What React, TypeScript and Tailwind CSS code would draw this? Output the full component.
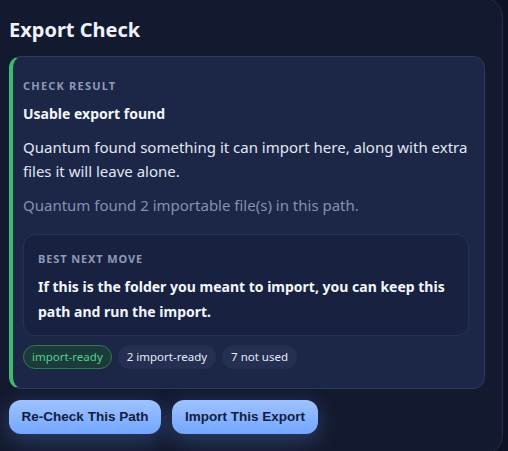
import React from "react";

export default function App() {
  const body = { fontFamily: '"Noto Sans", "Open Sans", sans-serif' };
  const btn = { fontFamily: '"Liberation Sans", Arial, sans-serif' };
  return (
    <div className="w-[508px] h-[451px] overflow-hidden bg-[#0d1322]" style={body}>
      <div className="-ml-[12px] -mt-[3px] w-[515px] h-[458px] rounded-[20px] border border-[#232d48] bg-[#131a2f] pl-[20px] pr-[17px] pt-[18px]">
        <h1 className="text-[20px] leading-[28px] font-bold text-[#eef2fb]">Export Check</h1>
        <div className="mt-[12px] w-[476px] rounded-[12px] border border-[#2c3960] border-l-[4px] border-l-[#3dbb6c] bg-[#1c2646] pl-[10px] pr-[15px] pt-[21px] pb-[19px]">
          <div className="text-[11px] leading-[16px] font-bold tracking-[0.11em] text-[#8d9aba]">CHECK RESULT</div>
          <div className="mt-[9px] text-[14px] leading-[22px] font-bold text-[#f3f6fc]">Usable export found</div>
          <p className="mt-[10px] text-[15px] leading-[24px] text-[#e2e7f3]">
            Quantum found something it can import here, along with extra files it will leave alone.
          </p>
          <p className="mt-[11px] text-[15px] leading-[22px] text-[#8391b3]">
            Quantum found 2 importable file(s) in this path.
          </p>
          <div className="mt-[18px] rounded-[12px] border border-[#25315a] bg-[#182240] px-[14px] pt-[16px] pb-[11px]">
            <div className="text-[11px] leading-[16px] font-bold tracking-[0.08em] text-[#8d9aba]">BEST NEXT MOVE</div>
            <div className="mt-[7px] text-[14px] leading-[25px] font-bold text-[#f3f6fc]">
              If this is the folder you meant to import, you can keep this path and run the import.
            </div>
          </div>
          <div className="mt-[9px] flex gap-[6px] text-[11.5px] leading-[16px]">
            <span className="rounded-full border border-[#2f7a52] bg-[#1b3a3a] px-[8px] py-[3px] text-[#52d389]">import-ready</span>
            <span className="rounded-full bg-[#242f52] px-[9px] py-[4px] text-[#e6ebf7]">2 import-ready</span>
            <span className="rounded-full bg-[#242f52] px-[9px] py-[4px] text-[#e6ebf7]">7 not used</span>
          </div>
        </div>
        <div className="mt-[11px] flex gap-[11px]" style={btn}>
          <button className="h-[34px] w-[152px] rounded-[12px] bg-gradient-to-b from-[#9ec2ff] to-[#74a6ff] text-[13.5px] font-bold text-[#11203c] shadow-[0_6px_22px_rgba(110,160,255,0.28)]">
            Re-Check This Path
          </button>
          <button className="h-[34px] w-[146px] rounded-[12px] bg-gradient-to-b from-[#9ec2ff] to-[#74a6ff] text-[13.5px] font-bold text-[#11203c] shadow-[0_6px_22px_rgba(110,160,255,0.28)]">
            Import This Export
          </button>
        </div>
      </div>
    </div>
  );
}
